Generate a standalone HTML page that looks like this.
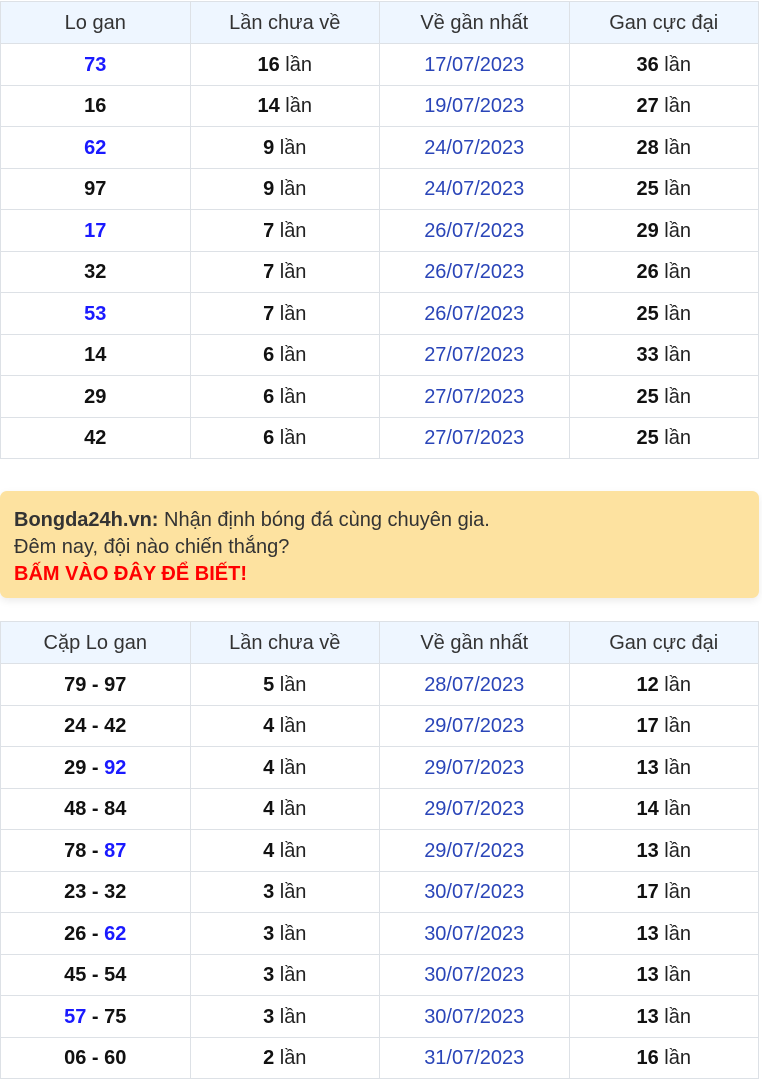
<!DOCTYPE html>
<html><head><meta charset="utf-8"><style>
body{margin:0;background:#fff;font-family:"Liberation Sans",Arial,sans-serif;width:762px;height:1081px;overflow:hidden}
table{border-collapse:collapse;width:759px;table-layout:fixed;position:absolute;left:0}
td,th{border:1px solid #dde1e6;text-align:center;font-size:20px;padding:2px 0 0;height:38.5px;color:#222}
th{font-weight:normal;background:#eef6ff;color:#333;height:39px}
b{color:#111}
.bl{color:#1a1aff;font-weight:bold}
.d{color:#2a45b8}
.banner{position:absolute;left:0;top:491px;width:759px;height:107px;background:#fde2a0;border-radius:7px;box-shadow:0 3px 8px rgba(0,0,0,.08);box-sizing:border-box;padding:16px 14px;font-size:20px;line-height:27px;color:#333}
.banner .r{color:#f00;font-weight:bold}
</style></head><body>
<table style="top:1px">
<tr><th>Lo gan</th><th>Lần chưa về</th><th>Về gần nhất</th><th>Gan cực đại</th></tr>
<tr><td class="bl">73</td><td><b>16</b> lần</td><td class="d">17/07/2023</td><td><b>36</b> lần</td></tr>
<tr><td><b>16</b></td><td><b>14</b> lần</td><td class="d">19/07/2023</td><td><b>27</b> lần</td></tr>
<tr><td class="bl">62</td><td><b>9</b> lần</td><td class="d">24/07/2023</td><td><b>28</b> lần</td></tr>
<tr><td><b>97</b></td><td><b>9</b> lần</td><td class="d">24/07/2023</td><td><b>25</b> lần</td></tr>
<tr><td class="bl">17</td><td><b>7</b> lần</td><td class="d">26/07/2023</td><td><b>29</b> lần</td></tr>
<tr><td><b>32</b></td><td><b>7</b> lần</td><td class="d">26/07/2023</td><td><b>26</b> lần</td></tr>
<tr><td class="bl">53</td><td><b>7</b> lần</td><td class="d">26/07/2023</td><td><b>25</b> lần</td></tr>
<tr><td><b>14</b></td><td><b>6</b> lần</td><td class="d">27/07/2023</td><td><b>33</b> lần</td></tr>
<tr><td><b>29</b></td><td><b>6</b> lần</td><td class="d">27/07/2023</td><td><b>25</b> lần</td></tr>
<tr><td><b>42</b></td><td><b>6</b> lần</td><td class="d">27/07/2023</td><td><b>25</b> lần</td></tr>
</table>
<div class="banner"><b style="color:#333">Bongda24h.vn:</b> Nhận định bóng đá cùng chuyên gia.<br>Đêm nay, đội nào chiến thắng?<br><span class="r">BẤM VÀO ĐÂY ĐỂ BIẾT!</span></div>
<table style="top:621px">
<tr><th>Cặp Lo gan</th><th>Lần chưa về</th><th>Về gần nhất</th><th>Gan cực đại</th></tr>
<tr><td><b>79 - 97</b></td><td><b>5</b> lần</td><td class="d">28/07/2023</td><td><b>12</b> lần</td></tr>
<tr><td><b>24 - 42</b></td><td><b>4</b> lần</td><td class="d">29/07/2023</td><td><b>17</b> lần</td></tr>
<tr><td><b>29 - </b><span class="bl">92</span></td><td><b>4</b> lần</td><td class="d">29/07/2023</td><td><b>13</b> lần</td></tr>
<tr><td><b>48 - 84</b></td><td><b>4</b> lần</td><td class="d">29/07/2023</td><td><b>14</b> lần</td></tr>
<tr><td><b>78 - </b><span class="bl">87</span></td><td><b>4</b> lần</td><td class="d">29/07/2023</td><td><b>13</b> lần</td></tr>
<tr><td><b>23 - 32</b></td><td><b>3</b> lần</td><td class="d">30/07/2023</td><td><b>17</b> lần</td></tr>
<tr><td><b>26 - </b><span class="bl">62</span></td><td><b>3</b> lần</td><td class="d">30/07/2023</td><td><b>13</b> lần</td></tr>
<tr><td><b>45 - 54</b></td><td><b>3</b> lần</td><td class="d">30/07/2023</td><td><b>13</b> lần</td></tr>
<tr><td><span class="bl">57</span><b> - 75</b></td><td><b>3</b> lần</td><td class="d">30/07/2023</td><td><b>13</b> lần</td></tr>
<tr><td><b>06 - 60</b></td><td><b>2</b> lần</td><td class="d">31/07/2023</td><td><b>16</b> lần</td></tr>
</table>
</body></html>
